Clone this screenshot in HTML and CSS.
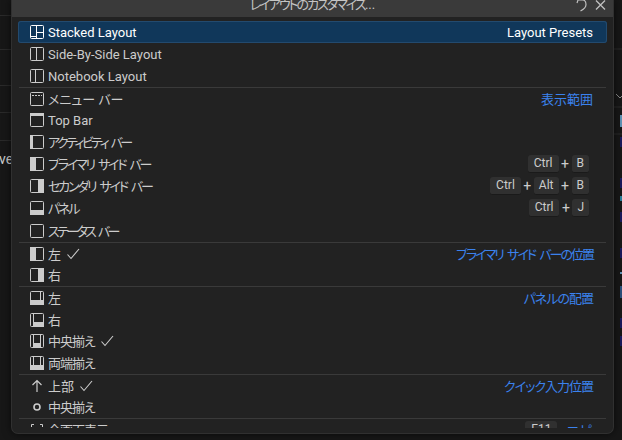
FILE: index.html
```html
<!DOCTYPE html>
<html lang="ja">
<head>
<meta charset="utf-8">
<title>レイアウトのカスタマイズ</title>
<link rel="stylesheet" href="styles.css">
</head>
<body>
<svg class="sprite" aria-hidden="true">
  <symbol id="frame" viewBox="0 0 14 14"><rect x=".5" y=".5" width="13" height="13" rx="1" fill="none" stroke="currentColor"/></symbol>
  <symbol id="stacked" viewBox="0 0 14 14"><rect x=".5" y=".5" width="13" height="13" rx="1" fill="none" stroke="currentColor"/><path d="M6.5 0v14M6.5 7.500H14M0 11.500h6" stroke="currentColor" fill="none"/></symbol>
  <symbol id="sideby" viewBox="0 0 14 14"><rect x=".5" y=".5" width="13" height="13" rx="1" fill="none" stroke="currentColor"/><path d="M6.5 0v14" stroke="currentColor" fill="none"/></symbol>
  <symbol id="notebook" viewBox="0 0 14 14"><rect x=".5" y=".5" width="13" height="13" rx="1" fill="none" stroke="currentColor"/><path d="M5.500 0v14" stroke="currentColor" fill="none"/></symbol>
  <symbol id="menu" viewBox="0 0 14 14"><rect x=".5" y=".5" width="13" height="13" rx="1" fill="none" stroke="currentColor"/><path d="M2 3.5h10" stroke="currentColor" stroke-dasharray="2 1" fill="none"/></symbol>
  <symbol id="top" viewBox="0 0 14 14"><rect x=".5" y=".5" width="13" height="13" rx="1" fill="none" stroke="currentColor"/><rect x="0" y="0" width="14" height="3" fill="currentColor"/></symbol>
  <symbol id="activity" viewBox="0 0 14 14"><rect x=".5" y=".5" width="13" height="13" rx="1" fill="none" stroke="currentColor"/><rect x="0" y="0" width="3" height="14" fill="currentColor"/></symbol>
  <symbol id="primary" viewBox="0 0 14 14"><rect x=".5" y=".5" width="13" height="13" rx="1" fill="none" stroke="currentColor"/><rect x="0" y="0" width="6" height="14" fill="currentColor"/></symbol>
  <symbol id="secondary" viewBox="0 0 14 14"><rect x=".5" y=".5" width="13" height="13" rx="1" fill="none" stroke="currentColor"/><rect x="8" y="0" width="6" height="14" fill="currentColor"/></symbol>
  <symbol id="panel" viewBox="0 0 14 14"><rect x=".5" y=".5" width="13" height="13" rx="1" fill="none" stroke="currentColor"/><rect x="0" y="9" width="14" height="5" fill="currentColor"/></symbol>
  <symbol id="pleft" viewBox="0 0 14 14"><rect x=".5" y=".5" width="13" height="13" rx="1" fill="none" stroke="currentColor"/><rect x="0" y="9" width="14" height="5" fill="currentColor"/><path d="M10.5 0v9" stroke="currentColor" fill="none"/></symbol>
  <symbol id="pright" viewBox="0 0 14 14"><rect x=".5" y=".5" width="13" height="13" rx="1" fill="none" stroke="currentColor"/><rect x="3" y="9" width="11" height="5" fill="currentColor"/><path d="M3.5 0v14" stroke="currentColor" fill="none"/></symbol>
  <symbol id="pcenter" viewBox="0 0 14 14"><rect x=".5" y=".5" width="13" height="13" rx="1" fill="none" stroke="currentColor"/><rect x="3" y="9" width="8" height="5" fill="currentColor"/><path d="M3.5 0v14M10.5 0v14" stroke="currentColor" fill="none"/></symbol>
  <symbol id="pjustify" viewBox="0 0 14 14"><rect x=".5" y=".5" width="13" height="13" rx="1" fill="none" stroke="currentColor"/><rect x="0" y="9" width="14" height="5" fill="currentColor"/><path d="M3.5 0v9M10.5 0v9" stroke="currentColor" fill="none"/></symbol>
  <symbol id="up" viewBox="0 0 14 14"><path d="M7 13V1.5M2.5 6 7 1.5 11.5 6" stroke="currentColor" stroke-width="1.2" fill="none"/></symbol>
  <symbol id="dot" viewBox="0 0 14 14"><circle cx="7" cy="7" r="3" stroke="currentColor" stroke-width="1.6" fill="none"/></symbol>
  <symbol id="full" viewBox="0 0 14 14"><path d="M4 1.5H1.5V4M10 1.5h2.5V4M4 12.5H1.5V10M10 12.5h2.5V10" stroke="currentColor" fill="none"/></symbol>
  <symbol id="check" viewBox="0 0 16 16"><path d="M2.5 8.5 6 12.5 14 3" stroke="currentColor" stroke-width="1.1" fill="none"/></symbol>
</svg>

<div class="backdrop">
  <div class="side-left">
    <div class="bg-row r15"></div>
    <div class="bg-row r34"></div>
    <div class="bg-row r36"></div>
    <div class="bg-row r27"></div>
    <div class="bg-row r28"></div>
    <div class="bg-text">ve</div>
  </div>
  <div class="side-right">
    <svg class="bg-art" width="9" height="440" viewBox="0 0 9 440">
      <path d="M0 49h9M0 107h9M0 134h9" stroke="#2c2c2c" fill="none"/>
      <path d="M3 94l4 4 2-2" stroke="#8a8a8a" fill="none"/>
      <rect x="7" y="115" width="2" height="12" fill="#5f93b5"/>
      <rect x="7" y="137" width="2" height="10" fill="#1a1a5c"/>
      <rect x="7" y="178" width="2" height="10" fill="#1a1a5c"/>
      <rect x="7" y="196" width="2" height="5" fill="#2a7f9a"/>
      <rect x="7" y="212" width="2" height="10" fill="#1a1a5c"/>
      <rect x="7" y="248" width="2" height="10" fill="#1a1a5c"/>
      <rect x="7" y="272" width="2" height="2" fill="#5f93b5"/>
      <rect x="7" y="286" width="2" height="12" fill="#2b4f7a"/>
      <rect x="7" y="318" width="2" height="10" fill="#1a1a5c"/>
      <rect x="7" y="336" width="2" height="10" fill="#1a1a5c"/>
    </svg>
  </div>
</div>

<section class="dialog">
  <header class="titlebar">
    <span class="title">レイアウトのカスタマイズ<span class="dots">...</span></span>
    <div class="actions">
      <svg class="act undo" width="12" height="16" viewBox="0 0 12 16"><path d="M3 1h4.500C10 1 11 3.500 11 5.500c0 3-2.500 5-5.500 6.500M2 4l1-3-1-3" stroke="currentColor" stroke-width="1.200" fill="none"/></svg>
      <svg class="act" width="11" height="16" viewBox="0 0 11 16"><path d="M1 1.500 10 10.500M10 1.500 1 10.500" stroke="currentColor" stroke-width="1.300" fill="none"/></svg>
    </div>
  </header>

  <div class="list">
    <div class="group-first">
      <div class="row active"><svg class="ico"><use href="#stacked"/></svg><span class="label">Stacked Layout</span><span class="cat white">Layout Presets</span></div>
      <div class="row"><svg class="ico"><use href="#sideby"/></svg><span class="label">Side-By-Side Layout</span></div>
      <div class="row"><svg class="ico"><use href="#notebook"/></svg><span class="label">Notebook Layout</span></div>
    </div>

    <div class="group">
      <div class="row short"><svg class="ico"><use href="#menu"/></svg><span class="label">メニュー バー</span><span class="cat">表示範囲</span></div>
      <div class="row"><svg class="ico"><use href="#top"/></svg><span class="label">Top Bar</span></div>
      <div class="row"><svg class="ico"><use href="#activity"/></svg><span class="label narrow-3">アクティビティ バー</span></div>
      <div class="row"><svg class="ico"><use href="#primary"/></svg><span class="label narrow-2">プライマリ サイド バー</span><span class="keys"><kbd class="ctrl">Ctrl</kbd><i>+</i><kbd>B</kbd></span></div>
      <div class="row"><svg class="ico"><use href="#secondary"/></svg><span class="label narrow-2">セカンダリ サイド バー</span><span class="keys"><kbd class="ctrl">Ctrl</kbd><i>+</i><kbd>Alt</kbd><i>+</i><kbd>B</kbd></span></div>
      <div class="row"><svg class="ico"><use href="#panel"/></svg><span class="label narrow-2">パネル</span><span class="keys"><kbd class="ctrl">Ctrl</kbd><i>+</i><kbd>J</kbd></span></div>
      <div class="row tall"><svg class="ico"><use href="#frame"/></svg><span class="label narrow-3">ステータス バー</span></div>
    </div>

    <div class="group">
      <div class="row"><svg class="ico"><use href="#primary"/></svg><span class="label">左</span><svg class="chk"><use href="#check"/></svg><span class="cat narrow-2">プライマリ サイド バーの位置</span></div>
      <div class="row short raised"><svg class="ico"><use href="#secondary"/></svg><span class="label">右</span></div>
    </div>

    <div class="group">
      <div class="row"><svg class="ico"><use href="#pleft"/></svg><span class="label">左</span><span class="cat narrow-1">パネルの配置</span></div>
      <div class="row short"><svg class="ico"><use href="#pright"/></svg><span class="label">右</span></div>
      <div class="row"><svg class="ico"><use href="#pcenter"/></svg><span class="label narrow-1">中央揃え</span><svg class="chk"><use href="#check"/></svg></div>
      <div class="row"><svg class="ico"><use href="#pjustify"/></svg><span class="label narrow-1">両端揃え</span></div>
    </div>

    <div class="group">
      <div class="row short"><svg class="ico"><use href="#up"/></svg><span class="label">上部</span><svg class="chk"><use href="#check"/></svg><span class="cat narrow-1">クイック入力位置</span></div>
      <div class="row"><svg class="ico"><use href="#dot"/></svg><span class="label narrow-1">中央揃え</span></div>
    </div>

    <div class="group">
      <div class="row"><svg class="ico"><use href="#full"/></svg><span class="label narrow-1">全画面表示</span><span class="keys flush"><kbd class="ctrl">F11</kbd></span><span class="cat after">エピ</span></div>
    </div>
  </div>
</section>
</body>
</html>
```

FILE: styles.css
```css
* { box-sizing: border-box; }

html, body {
  margin: 0;
  height: 100%;
}

body {
  background: #171717;
  color: #cccccc;
  font-family: Roboto, "Noto Sans CJK JP", sans-serif;
  font-size: 13px;
  font-feature-settings: "palt";
  overflow: hidden;
}

.sprite {
  display: none;
}

/* editor behind the dialog */
.backdrop {
  display: flex;
  justify-content: space-between;
  height: 440px;
}

.side-left {
  width: 11px;
  overflow: hidden;
}

.bg-row { border-bottom: 1px solid #2a2a2a; }
.r15 { height: 16px; }
.r34 { height: 34px; }
.r36 { height: 36px; }
.r27 { height: 27px; }
.r28 { height: 28px; }

.bg-text {
  margin-top: 8px;
  line-height: 20px;
  white-space: nowrap;
  font-size: 14px;
  text-indent: -1px;
}

.side-right {
  width: 9px;
}

.bg-art {
  display: block;
}

/* dialog over the editor */
.dialog {
  position: absolute;
  left: 11px;
  top: 0;
  width: 603px;
  height: 434px;
  display: flex;
  flex-direction: column;
  background: #222222;
  border: 1px solid #303030;
  border-top: 0;
  border-radius: 0 0 7px 7px;
  box-shadow: 0 0 8px rgba(0, 0, 0, .6);
}

.titlebar {
  position: relative;
  flex: none;
  height: 17px;
  background: #3a3a3a;
  display: flex;
  align-items: flex-end;
  justify-content: center;
  overflow: hidden;
  padding-bottom: 1px;
}

.title {
  line-height: 22px;
  color: #c4c4c4;
  letter-spacing: -2px;
  white-space: nowrap;
}

.dots {
  letter-spacing: 0;
}

.actions {
  position: absolute;
  right: 7px;
  top: -1px;
  display: flex;
  align-items: flex-start;
  gap: 8px;
  color: #c0c0c0;
}

.list {
  flex: none;
  height: 407px;
  margin: 4px 6px 0;
  overflow: hidden;
}

.group {
  margin: 0 1px;
  border-top: 1px solid #3a3a3a;
}

.group .row {
  margin: 0 -1px;
}

.row {
  display: flex;
  align-items: center;
  height: 22px;
  padding: 0 14px 0 12px;
  border-radius: 3px;
  white-space: nowrap;
}

.row.short { height: 21px; }
.row.tall { height: 23px; }
.row.raised { padding-bottom: 1px; }

.active {
  background: #10375a;
  box-shadow: inset 0 0 0 1px #234a6e;
  color: #ffffff;
}

.ico {
  flex: none;
  width: 14px;
  height: 14px;
  margin-right: 4px;
}

.label {
  line-height: 22px;
  padding-top: 2px;
}

/* the reference's kana run tighter than the installed CJK face */
.narrow-1 { letter-spacing: -1px; }
.narrow-2 { letter-spacing: -2.200px; word-spacing: 3px; }
.narrow-3 { letter-spacing: -2.600px; word-spacing: 3px; }

.chk {
  flex: none;
  width: 16px;
  height: 16px;
  margin-left: 4px;
}

.cat {
  margin-left: auto;
  color: #3b82ee;
  line-height: 22px;
  padding-top: 2px;
}

.cat.narrow-2 {
  letter-spacing: -2px;
}

.cat.after {
  margin-left: 9px;
  letter-spacing: 1px;
}

.cat.white {
  color: #ffffff;
}

.keys {
  margin-left: auto;
  margin-right: 4px;
  display: flex;
  align-items: center;
}

.keys.flush {
  margin-right: 0;
}

.keys i {
  font-style: normal;
  width: 13px;
  text-align: center;
  font-size: 14px;
}

kbd {
  font: inherit;
  font-size: 12px;
  line-height: 17px;
  height: 18px;
  padding: 0 5px;
  text-align: center;
  background: #303030;
  border-bottom: 1px solid #1a1a1a;
  border-radius: 3px;
  color: #cccccc;
}

kbd.ctrl {
  padding: 0 6px;
}
```
